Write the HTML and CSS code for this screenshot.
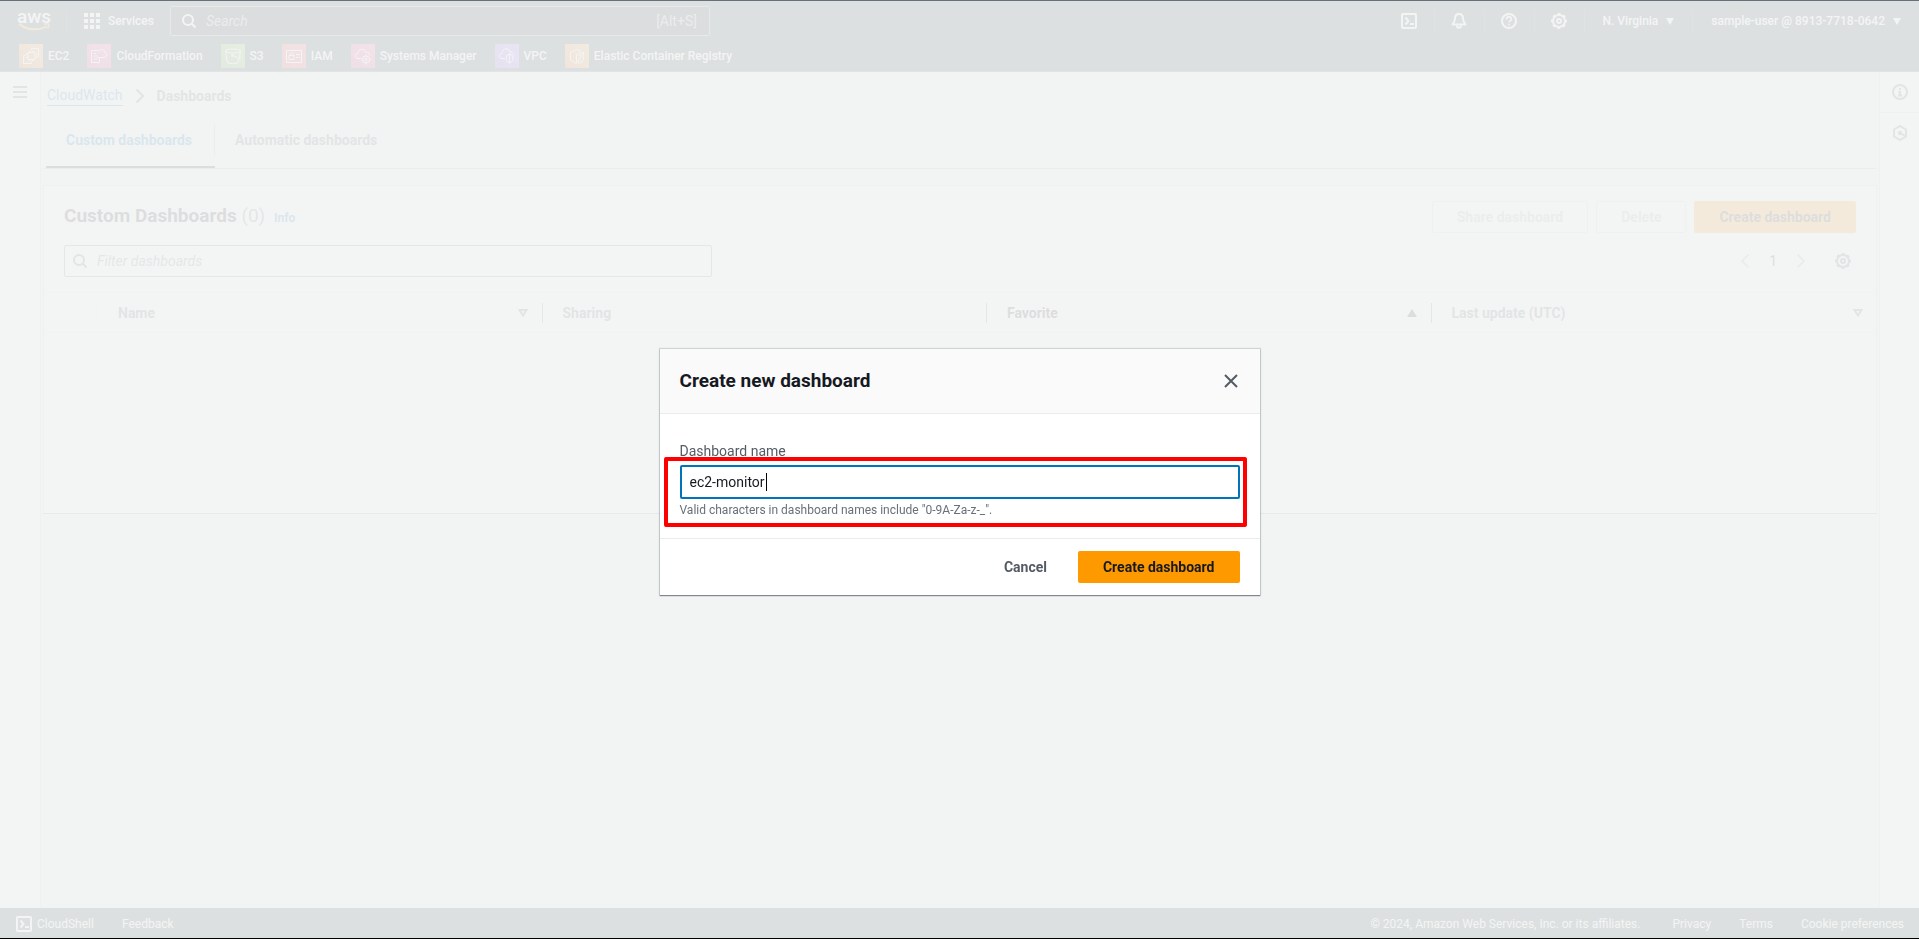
FILE: index.html
```html
<!DOCTYPE html>
<html lang="en">
<head>
<meta charset="utf-8">
<meta name="viewport" content="width=device-width, initial-scale=1">
<title>CloudWatch Dashboards</title>
<link rel="stylesheet" href="styles.css">
</head>
<body>
<div class="app">
  <header class="topnav">
    <div class="topnav-main">
      <a class="logo" href="#" aria-label="AWS home">
        <span class="logo-word">aws</span>
        <svg class="logo-smile" width="32" height="8" viewBox="0 0 32 8" fill="none" stroke="#ff9900" stroke-width="2"><path d="M1 1c8 6.500 20 7 28 2"/><path d="M26 1.200c3-.7 5-.4 5 .2s-.4 2.600-1.600 4" stroke-width="1.500"/></svg>
      </a>
      <button class="services" type="button">
        <svg width="16" height="16" viewBox="0 0 16 16" fill="currentColor"><path d="M0 0h4v4H0zM6 0h4v4H6zM12 0h4v4h-4zM0 6h4v4H0zM6 6h4v4H6zM12 6h4v4h-4zM0 12h4v4H0zM6 12h4v4H6zM12 12h4v4h-4z"/></svg>
        Services
      </button>
      <label class="search">
        <svg width="16" height="16" viewBox="0 0 16 16" fill="none" stroke="currentColor" stroke-width="2"><circle cx="7" cy="7" r="5"/><path d="m10.500 10.500 4 4"/></svg>
        <input type="search" placeholder="Search" aria-label="Search">
        <span class="shortcut">[Alt+S]</span>
      </label>
      <nav class="utilities" aria-label="Utilities">
        <button type="button" aria-label="CloudShell"><svg width="16" height="16" viewBox="0 0 16 16" fill="none" stroke="currentColor" stroke-width="2"><rect x="1" y="1" width="14" height="14" rx="1"/><path d="m4.500 4.500 3 3.500-3 3.500M9 11h4"/></svg></button>
        <button type="button" aria-label="Notifications"><svg width="16" height="16" viewBox="0 0 16 16" fill="none" stroke="currentColor" stroke-width="2" stroke-linejoin="round"><path d="M8 1c-3 0-4 2-4 4.500S3 9 1.500 11.500h13C13 9 12 8 12 5.500S11 1 8 1z"/><path d="M6 12.500c0 3 4 3 4 0"/></svg></button>
        <button type="button" aria-label="Help"><svg width="16" height="16" viewBox="0 0 16 16" fill="none" stroke="currentColor" stroke-width="2"><circle cx="8" cy="8" r="7"/><path d="M5.500 6.500c0-3.500 5-3.200 5-.3C10.500 7.800 8 7.500 8 9.500M8 10.800v1.700" stroke-width="1.700"/></svg></button>
        <button type="button" aria-label="Settings"><svg width="16" height="16" viewBox="0 0 16 16" fill="none" stroke="currentColor" stroke-width="2"><circle cx="8" cy="8" r="6"/><circle cx="8" cy="8" r="7" stroke-dasharray="2.750 2.750" stroke-dashoffset="1.375"/><circle cx="8" cy="8" r="2"/></svg></button>
        <button type="button" class="menu">N. Virginia <svg width="8" height="7" viewBox="0 0 8 7" fill="currentColor"><path d="M0 0h8L4 7z"/></svg></button>
        <button type="button" class="menu">sample-user @ 8913-7718-0642 <svg width="8" height="7" viewBox="0 0 8 7" fill="currentColor"><path d="M0 0h8L4 7z"/></svg></button>
      </nav>
    </div>
    <nav class="favorites" aria-label="Favorites">
      <a href="#"><svg class="orange" viewBox="0 0 24 24"><path d="M9 8.500h7v7H9zM11 6.500v2M14 6.500v2M11 15.500v2M14 15.500v2M7 10.500h2M7 13.500h2M16 10.500h2M16 13.500h2M12.500 6V4.500h7v8H18M6.500 11.500h-2v8h8V18"/></svg>EC2</a>
      <a href="#"><svg class="pink" viewBox="0 0 24 24"><path d="M11.500 6.500h-7v12h8v-4M6.500 9.500h3M6.500 12h4M6.500 15h4M10 13.500h7c3.500 0 3.500-4.500.8-4.800C17.500 4.500 12 4.500 11.500 8.500"/></svg>CloudFormation</a>
      <a href="#"><svg class="green" viewBox="0 0 24 24"><ellipse cx="12" cy="7" rx="7.500" ry="2"/><path d="m4.500 7 1.800 11.500c2 1.500 9 1.500 11 0L19.500 7M11 11l7 3.500c2 .3 2-1 .5-2"/><circle cx="11.500" cy="11.500" r="1"/></svg>S3</a>
      <a href="#"><svg class="red" viewBox="0 0 24 24"><path d="M4.500 6.500h15v12h-15zM7 11.500h5v4H7zM8 11.500c-.3-4 3.300-4 3 0M14 10.500h4M14 13.500h2M17 13.500h1"/></svg>IAM</a>
      <a href="#"><svg class="pink" viewBox="0 0 24 24"><path d="M10 14.500H7c-3.500-.5-3.500-5 0-5C7.500 4 14 4 15 8.500c2.500-.5 4 1 4 3"/><circle cx="15" cy="15.500" r="3.500"/><circle cx="15" cy="15.500" r="1.200"/><path d="M15 10.500v1.500M15 19v1.500M10.500 15.500h1M18.500 15.500h1.500"/></svg>Systems Manager</a>
      <a href="#"><svg class="purple" viewBox="0 0 24 24"><path d="M10 14.500H7c-3.500-.5-3.500-5 0-5C7.500 3.500 14 3.500 15 8c2 0 3.500.5 4 2.500"/><path d="M11.500 11.500 14.500 10l3.500 1.500v3.500c0 2-1.500 3-3.500 4-2-1-3-2-3-4zM14.500 10v9"/></svg>VPC</a>
      <a href="#"><svg class="orange" viewBox="0 0 24 24"><path d="m11 19.500-5.500-3.500V8.500L12 5.500l4 2-4.500 3v9M13.500 19.500v-4l2.500-1.500V10l2.500-1.500V16l-4 3.500M14 12.500v-1.500l4.500-2.500"/></svg>Elastic Container Registry</a>
    </nav>
  </header>

  <div class="body">
    <aside class="rail rail-left">
      <button type="button" aria-label="Open navigation"><svg width="14" height="12" viewBox="0 0 14 12" fill="currentColor"><path d="M0 0h14v2H0zM0 5h14v2H0zM0 10h14v2H0z"/></svg></button>
    </aside>
    <main class="content">
      <nav class="breadcrumb" aria-label="Breadcrumb">
        <a href="#">CloudWatch</a>
        <svg width="10" height="16" viewBox="0 0 10 16" fill="none" stroke="currentColor" stroke-width="2"><path d="m1.500 1.500 6.500 6.500-6.500 6.500"/></svg>
        <span>Dashboards</span>
      </nav>
      <div class="tabs" role="tablist">
        <button type="button" role="tab" aria-selected="true" class="tab active"><span>Custom dashboards</span></button>
        <button type="button" role="tab" aria-selected="false" class="tab"><span>Automatic dashboards</span></button>
      </div>
      <section class="panel">
        <div class="panel-head">
          <h1>Custom Dashboards <span class="count">(0)</span> <a href="#">Info</a></h1>
          <div class="actions">
            <button type="button" class="btn disabled" disabled>Share dashboard</button>
            <button type="button" class="btn disabled" disabled>Delete</button>
            <button type="button" class="btn primary">Create dashboard</button>
          </div>
        </div>
        <div class="panel-tools">
          <label class="filter">
            <svg width="16" height="16" viewBox="0 0 16 16" fill="none" stroke="currentColor" stroke-width="2"><circle cx="7" cy="7" r="5"/><path d="m10.500 10.500 4 4"/></svg>
            <input type="search" placeholder="Filter dashboards" aria-label="Filter dashboards">
          </label>
          <div class="pager">
            <button type="button" class="muted" aria-label="Previous page"><svg width="10" height="16" viewBox="0 0 10 16" fill="none" stroke="currentColor" stroke-width="2"><path d="M8.500 1.500 2 8l6.500 6.500"/></svg></button>
            <span class="page">1</span>
            <button type="button" class="muted" aria-label="Next page"><svg width="10" height="16" viewBox="0 0 10 16" fill="none" stroke="currentColor" stroke-width="2"><path d="M1.500 1.500 8 8l-6.500 6.500"/></svg></button>
            <button type="button" class="prefs" aria-label="Preferences"><svg width="16" height="16" viewBox="0 0 16 16" fill="none" stroke="currentColor" stroke-width="2"><circle cx="8" cy="8" r="6"/><circle cx="8" cy="8" r="7" stroke-dasharray="2.750 2.750" stroke-dashoffset="1.375"/><circle cx="8" cy="8" r="2"/></svg></button>
          </div>
        </div>
        <table>
          <colgroup><col class="select-col"><col><col><col><col></colgroup>
          <thead>
            <tr>
              <th><div class="th faint"></div></th>
              <th scope="col"><div class="th">Name <svg width="10" height="8" viewBox="0 0 10 8" fill="none" stroke="currentColor" stroke-width="2"><path d="M1.500 1h7L5 6.500z"/></svg></div></th>
              <th scope="col"><div class="th">Sharing</div></th>
              <th scope="col" class="sorted"><div class="th">Favorite <svg width="10" height="8" viewBox="0 0 10 8" fill="currentColor"><path d="M0 8h10L5 0z"/></svg></div></th>
              <th scope="col"><div class="th last">Last update (UTC) <svg width="10" height="8" viewBox="0 0 10 8" fill="none" stroke="currentColor" stroke-width="2"><path d="M1.500 1h7L5 6.500z"/></svg></div></th>
            </tr>
          </thead>
          <tbody><tr><td class="empty" colspan="5"></td></tr></tbody>
        </table>
      </section>
    </main>
    <aside class="rail rail-right">
      <button type="button" aria-label="Info"><svg width="16" height="16" viewBox="0 0 16 16" fill="none" stroke="currentColor" stroke-width="2"><circle cx="8" cy="8" r="7"/><path d="M8 4v2M6.500 8H8v3.500M6 11.500h4"/></svg></button>
      <button type="button" aria-label="Diagnostics"><svg width="16" height="16" viewBox="0 0 16 16" fill="none" stroke="currentColor" stroke-width="2"><path d="m8 1 6 3.500v7L8 15l-6-3.500v-7z"/><circle cx="8" cy="8" r="1.200"/><path d="m9 8.500 4 2.500"/></svg></button>
    </aside>
  </div>

  <footer class="footer">
    <a href="#" class="shell"><svg width="16" height="16" viewBox="0 0 16 16" fill="none" stroke="currentColor" stroke-width="2"><rect x="1" y="1" width="14" height="14" rx="1"/><path d="m4.500 4.500 3 3.500-3 3.500M9 11h4"/></svg>CloudShell</a>
    <a href="#">Feedback</a>
    <span class="copyright">© 2024, Amazon Web Services, Inc. or its affiliates.</span>
    <a href="#">Privacy</a>
    <a href="#">Terms</a>
    <a href="#">Cookie preferences</a>
  </footer>
</div>

<div class="backdrop">
  <form class="modal" role="dialog" aria-modal="true" aria-labelledby="modal-title">
    <div class="modal-head">
      <h2 id="modal-title">Create new dashboard</h2>
      <button type="button" aria-label="Close"><svg width="16" height="16" viewBox="0 0 16 16" fill="none" stroke="currentColor" stroke-width="2"><path d="m2 2 12 12M14 2 2 14"/></svg></button>
    </div>
    <div class="modal-body">
      <label for="dashboard-name">Dashboard name</label>
      <div class="field">
        <input id="dashboard-name" type="text" value="ec2-monitor" aria-describedby="name-hint">
        <span class="caret"></span>
        <p id="name-hint">Valid characters in dashboard names include "0-9A-Za-z-_".</p>
        <span class="highlight"></span>
      </div>
    </div>
    <div class="modal-foot">
      <button type="button" class="btn link">Cancel</button>
      <button type="submit" class="btn primary">Create dashboard</button>
    </div>
  </form>
</div>
</body>
</html>
```
FILE: styles.css
```css
* { box-sizing: border-box; }

body {
  margin: 0;
  font-family: Roboto, "Noto Sans", sans-serif;
  font-size: 14px;
  line-height: 20px;
  color: #545b64;
  background: #f2f3f3;
}

button {
  font: inherit;
  color: inherit;
  background: none;
  border: 0;
  padding: 0;
}

input { font: inherit; color: inherit; }
a { color: inherit; text-decoration: none; }
svg { flex: none; display: block; }

.app {
  display: flex;
  flex-direction: column;
  min-height: 100vh;
  padding: 1px 0;
}

/* Top navigation */
.topnav {
  background: #1b3539;
  border-bottom: 1px solid #545b64;
  color: #fff;
  font-size: 12px;
  font-weight: 500;
}

.topnav-main {
  display: flex;
  align-items: center;
  height: 40px;
  padding: 0 18px;
}

.logo {
  display: flex;
  flex-direction: column;
  align-items: center;
  width: 32px;
}

.logo-word { font-size: 19px; line-height: 12px; }

.services {
  display: flex;
  align-items: center;
  gap: 8px;
  height: 20px;
  margin-left: 16px;
  padding-left: 17px;
  border-left: 1px solid #414d5c;
}

.search {
  display: flex;
  align-items: center;
  gap: 9px;
  flex: 0 1 540px;
  height: 30px;
  margin-left: 16px;
  padding: 0 12px 0 10px;
  border: 1px solid #879596;
  border-radius: 2px;
  background: #16191f;
}

.search input, .filter input {
  flex: 1;
  min-width: 0;
  padding: 0;
  border: 0;
  outline: 0;
  background: none;
}

.search input { font-size: 14px; font-weight: 400; }
.search input::placeholder { color: #aab7b8; font-style: italic; }
.shortcut { color: #aab7b8; font-size: 14px; font-weight: 400; }

.utilities {
  display: flex;
  align-items: center;
  margin-left: auto;
}

.utilities button {
  display: flex;
  align-items: center;
  justify-content: center;
  gap: 8px;
  width: 50px;
  height: 22px;
  border-right: 1px solid #414d5c;
}

.utilities .menu { width: auto; padding: 0 18px; }
.utilities .menu:last-child { padding-right: 0; border-right: 0; }

.favorites {
  display: flex;
  align-items: center;
  gap: 18px;
  height: 30px;
  padding: 0 19px;
}

.favorites a { display: flex; align-items: center; gap: 5px; }

.favorites svg {
  width: 24px;
  height: 24px;
  fill: none;
  stroke: #fff;
  stroke-width: 1;
}

.orange { background: linear-gradient(45deg, #d86613, #f9a13f); }
.pink { background: linear-gradient(45deg, #d5286f, #ff4f8b); }
.green { background: linear-gradient(45deg, #5a9a2f, #7fbf45); }
.red { background: linear-gradient(45deg, #dd344c, #ff5252); }
.purple { background: linear-gradient(45deg, #7347d8, #a166ff); }

/* Page body */
.body { display: flex; flex: 1; }

.rail {
  flex: 0 0 40px;
  background: #fff;
  border: 0 solid #d5dbdb;
}

.rail-left { flex-basis: 41px; border-right-width: 1px; }
.rail-right { border-left-width: 1px; }

.rail button {
  display: flex;
  align-items: center;
  justify-content: center;
  width: 100%;
  height: 40px;
}

.rail-right button + button { border-top: 1px solid #d5dbdb; }

.content { flex: 1; min-width: 0; padding: 13px 2px 0; }

.breadcrumb {
  display: flex;
  align-items: center;
  gap: 12px;
  padding-left: 4px;
  font-weight: 700;
}

.breadcrumb a {
  color: #0073bb;
  font-weight: 400;
  border-bottom: 1px solid #0073bb;
}

.tabs {
  display: flex;
  padding-left: 2px;
  margin: 0 1px;
  border-bottom: 1px solid #aab7b8;
}

.tab {
  display: flex;
  height: 62px;
  padding: 19px 0 10px;
  font-weight: 700;
}

.tab span {
  display: flex;
  align-items: center;
  padding: 0 22px 0 20px;
  height: 30px;
}

.tab.active { color: #0073bb; border-bottom: 2px solid #16191f; }
.tab.active span { border-right: 1px solid #aab7b8; }

.panel {
  margin-top: 16px;
  background: #fff;
  border: 1px solid #d5dbdb;
  border-bottom-color: #879596;
}

.panel-head, .panel-tools {
  display: flex;
  align-items: center;
  justify-content: space-between;
  padding: 0 20px;
}

.panel-head { padding-top: 15px; }
.panel-tools { padding-top: 12px; padding-bottom: 15px; }

h1, h2 {
  margin: 0;
  font-size: 19px;
  line-height: 22px;
  font-weight: 700;
  color: #16191f;
}

.count { color: #687078; font-weight: 400; }
h1 a { margin-left: 4px; font-size: 12px; color: #0073bb; }

.actions { display: flex; gap: 8px; }

.btn {
  height: 32px;
  padding: 0 24px;
  border: 1px solid transparent;
  border-radius: 2px;
  font-weight: 700;
  color: #545b64;
}

.btn.disabled { border-color: #d5dbdb; color: #aab7b8; }
.btn.primary { background: #ff9900; color: #16191f; }

.filter {
  display: flex;
  align-items: center;
  gap: 9px;
  flex: 0 1 648px;
  height: 32px;
  padding: 0 7px;
  border: 1px solid #687078;
  border-radius: 2px;
}

.filter input::placeholder { color: #687078; font-style: italic; }

.pager { display: flex; align-items: center; gap: 19px; }
.pager .muted { color: #aab7b8; }
.page { color: #16191f; }

.prefs {
  display: flex;
  align-items: center;
  height: 32px;
  margin-left: -5px;
  padding: 0 5px 0 14px;
  border-left: 1px solid #eaeded;
}

table { width: 100%; border-collapse: collapse; table-layout: fixed; }
.select-col { width: 54px; }

th {
  height: 40px;
  padding: 0;
  border: solid #eaeded;
  border-width: 1px 0;
  font-weight: 700;
  text-align: left;
}

.th {
  display: flex;
  align-items: center;
  justify-content: space-between;
  height: 20px;
  padding: 0 14px 0 20px;
  border-right: 1px solid #687078;
}

.th.faint { border-color: #eaeded; }
.th.last { padding-right: 12px; border-color: transparent; }
.sorted { color: #16191f; }
.empty { height: 180px; padding: 0; }

/* Footer */
.footer {
  display: flex;
  align-items: center;
  gap: 28px;
  height: 30px;
  padding: 1px 15px 0 16px;
  background: #1b3539;
  color: #fff;
  font-size: 12px;
}

.shell { display: flex; align-items: center; gap: 5px; }
.copyright { margin: 0 4px 0 auto; }

/* Modal */
.backdrop {
  position: fixed;
  inset: 0;
  display: flex;
  align-items: center;
  justify-content: center;
  border-top: 1px solid #687078;
  border-bottom: 1px solid #000;
  background: rgba(242, 243, 243, 0.9) padding-box;
}

.modal {
  width: 600px;
  max-width: 100%;
  margin-top: 4px;
  background: #fff;
  box-shadow: 0 1px 1px rgba(0, 28, 36, 0.4), 0 0 1px 1px rgba(0, 28, 36, 0.15);
}

.modal-head {
  display: flex;
  align-items: center;
  justify-content: space-between;
  height: 65px;
  padding: 0 21px 0 20px;
  background: #fafafa;
  border-bottom: 1px solid #eaeded;
}

.modal-body { padding: 27px 20px 18px; }
.modal-body label { display: block; margin-bottom: 4px; }

.field { position: relative; }

.field input {
  display: block;
  width: 100%;
  height: 34px;
  padding: 0 8px;
  border: 2px solid #0073bb;
  border-radius: 2px;
  outline: 0;
  color: #16191f;
  background: #fff;
}

.field p {
  margin: 1px 0 0;
  font-size: 12px;
  color: #687078;
}

.caret {
  position: absolute;
  top: 8px;
  left: 86px;
  width: 1px;
  height: 18px;
  background: #000;
}

.highlight {
  position: absolute;
  inset: -8px -7px -7px -16px;
  border: 4px solid #f00;
  border-radius: 2px;
  pointer-events: none;
}

.modal-foot {
  display: flex;
  justify-content: flex-end;
  gap: 6px;
  padding: 12px 20px;
  border-top: 1px solid #eaeded;
}
```
